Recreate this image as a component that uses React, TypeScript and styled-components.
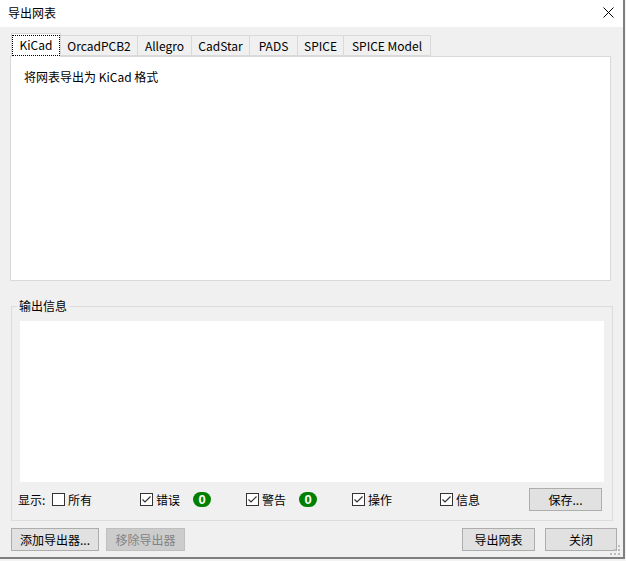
import React from "react";
import styled, { createGlobalStyle } from "styled-components";

const GlobalStyle = createGlobalStyle`
  html, body { margin: 0; padding: 0; background: #f3f3f3; }
  body { font-family: "Noto Sans CJK SC", "Noto Sans", sans-serif; font-size: 12px; color: #000; }
  * { box-sizing: border-box; }
`;

const Window = styled.div`
  position: relative;
  width: 625px;
  height: 559px;
  border-right: 2px solid #7f7f7f;
  border-bottom: 2px solid #7f7f7f;
  display: flex;
  flex-direction: column;
  background: #f0f0f0;
`;

const TitleBar = styled.div`
  height: 27px;
  background: #ffffff;
  display: flex;
  align-items: center;
  justify-content: space-between;
  padding: 0 9px 2px 8px;
  font-size: 12px;
  line-height: 16px;
`;

const CloseButton = styled.div`
  width: 12px;
  height: 12px;
  display: flex;
  align-items: center;
  justify-content: center;
`;

const Body = styled.div`
  flex: 1;
  display: flex;
  flex-direction: column;
  padding-top: 6px;
`;

const TabStrip = styled.div`
  display: flex;
  align-items: flex-end;
  height: 23px;
  margin-left: 11px;
  position: relative;
  z-index: 1;
`;

const Tab = styled.div<{ $active?: boolean; $w: number }>`
  width: ${(p) => p.$w}px;
  flex: none;
  height: ${(p) => (p.$active ? 24 : 21)}px;
  margin-bottom: ${(p) => (p.$active ? "-1px" : "0")};
  background: ${(p) => (p.$active ? "#ffffff" : "#f0f0f0")};
  border: 1px solid #d9d9d9;
  border-bottom: ${(p) => (p.$active ? "none" : "1px solid #d9d9d9")};
  border-left: ${(p) => (p.$active ? "1px solid #d9d9d9" : "none")};
  display: flex;
  align-items: ${(p) => (p.$active ? "flex-start" : "center")};
  justify-content: center;
  font-size: 12px;
  line-height: 16px;
  padding-top: ${(p) => (p.$active ? "2px" : "0")};
  z-index: ${(p) => (p.$active ? 2 : 1)};
`;

const FocusLabel = styled.span`
  outline: 1px dotted #000;
  outline-offset: 0;
  padding: 1px 3px 2px 3px;
  width: 46px;
  text-align: center;
`;

const Panel = styled.div`
  height: 225px;
  margin: 0 12px 0 10px;
  background: #ffffff;
  border: 1px solid #d9d9d9;
  padding: 12px 13px;
  font-size: 12px;
  line-height: 16px;
`;

const Group = styled.fieldset`
  margin: 17px 10px 0 11px;
  padding: 7px 8px 9px 8px;
  border: 1px solid #dcdcdc;
  min-width: 0;
  display: flex;
  flex-direction: column;
`;

const Legend = styled.legend`
  padding: 0 2px;
  margin-left: -3px;
  font-size: 12px;
  line-height: 16px;
`;

const OutputArea = styled.div`
  height: 161px;
  background: #ffffff;
`;

const ShowRow = styled.div`
  display: flex;
  align-items: center;
  height: 23px;
  margin-top: 6px;
  margin-left: -2px;
`;

const Cell = styled.div<{ $w: number }>`
  width: ${(p) => p.$w}px;
  flex: none;
  display: flex;
  align-items: center;
  line-height: 16px;
`;

const Box = styled.span`
  width: 13px;
  height: 13px;
  border: 1px solid #333333;
  background: #ffffff;
  display: inline-flex;
  align-items: center;
  justify-content: center;
  margin-right: 3px;
`;

const Badge = styled.span`
  width: 18px;
  height: 15px;
  border-radius: 8px;
  background: #008000;
  color: #ffffff;
  font-family: "Liberation Sans", sans-serif;
  font-weight: bold;
  font-size: 13px;
  line-height: 15px;
  text-align: center;
`;

const Button = styled.button<{ $w: number }>`
  width: ${(p) => p.$w}px;
  height: 23px;
  flex: none;
  background: #e1e1e1;
  border: 1px solid #adadad;
  font-family: "Noto Sans CJK SC", "Noto Sans", sans-serif;
  font-size: 12px;
  line-height: 16px;
  color: #000;
  padding: 0;
  &:disabled {
    background: #cccccc;
    border-color: #bfbfbf;
    color: #838383;
  }
`;

const BottomRow = styled.div`
  display: flex;
  align-items: center;
  margin: 7px 6px 0 11px;
  gap: 7px;
`;

const Spacer = styled.div`
  flex: 1;
`;

const RightButtons = styled.div`
  display: flex;
  gap: 10px;
`;

const Grip = styled.svg`
  position: absolute;
  right: 2px;
  bottom: 1px;
`;

const Check = ({ checked, label, w }: { checked: boolean; label: string; w: number }) => (
  <Cell $w={w}>
    <Box>
      {checked && (
        <svg width="11" height="11" viewBox="0 0 11 11">
          <polyline points="1.5,5.5 4,8 9.5,2.5" fill="none" stroke="#333" strokeWidth="1.2" />
        </svg>
      )}
    </Box>
    {label}
  </Cell>
);

const tabs = [
  { name: "KiCad", w: 50 },
  { name: "OrcadPCB2", w: 77 },
  { name: "Allegro", w: 54 },
  { name: "CadStar", w: 58 },
  { name: "PADS", w: 48 },
  { name: "SPICE", w: 46 },
  { name: "SPICE Model", w: 87 },
];

export default function App() {
  return (
    <>
      <GlobalStyle />
      <Window>
        <TitleBar>
          <span>导出网表</span>
          <CloseButton>
            <svg width="11" height="11" viewBox="0 0 11 11">
              <path d="M0.5 0.5 L10.5 10.5 M10.5 0.5 L0.5 10.5" stroke="#000" strokeWidth="1" />
            </svg>
          </CloseButton>
        </TitleBar>
        <Body>
          <TabStrip>
            {tabs.map((t, i) => (
              <Tab key={t.name} $active={i === 0} $w={t.w}>
                {i === 0 ? <FocusLabel>{t.name}</FocusLabel> : t.name}
              </Tab>
            ))}
          </TabStrip>
          <Panel>将网表导出为 KiCad 格式</Panel>
          <Group>
            <Legend>输出信息</Legend>
            <OutputArea />
            <ShowRow>
              <Cell $w={34}>显示:</Cell>
              <Check checked={false} label="所有" w={88} />
              <Check checked label="错误" w={53} />
              <Cell $w={53}>
                <Badge>0</Badge>
              </Cell>
              <Check checked label="警告" w={53} />
              <Cell $w={53}>
                <Badge>0</Badge>
              </Cell>
              <Check checked label="操作" w={88} />
              <Check checked label="信息" w={89} />
              <Button $w={73}>保存...</Button>
            </ShowRow>
          </Group>
          <BottomRow>
            <Button $w={88}>添加导出器...</Button>
            <Button $w={79} disabled>
              移除导出器
            </Button>
            <Spacer />
            <RightButtons>
              <Button $w={73}>导出网表</Button>
              <Button $w={72}>关闭</Button>
            </RightButtons>
          </BottomRow>
        </Body>
        <Grip width="12" height="12" viewBox="0 0 12 12">
          {[
            [9, 1],
            [9, 5],
            [9, 9],
            [5, 5],
            [5, 9],
            [1, 9],
          ].map(([x, y]) => (
            <rect key={`${x}-${y}`} x={x} y={y} width="2" height="2" fill="#bcbcbc" />
          ))}
        </Grip>
      </Window>
    </>
  );
}
